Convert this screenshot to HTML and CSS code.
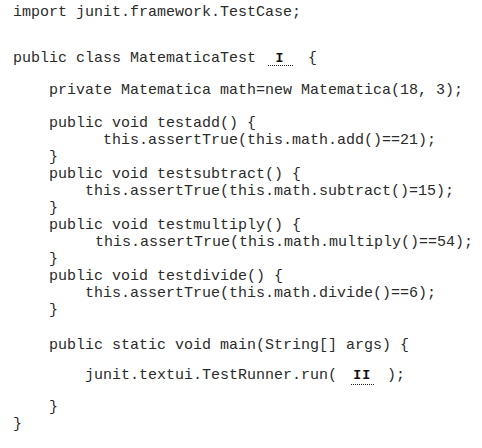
FILE: index.html
```html
<!DOCTYPE html>
<html>
<head>
<meta charset="utf-8">
<link rel="stylesheet" href="styles.css">
</head>
<body>
<div class="code">
  <div class="ln">import junit.framework.TestCase;</div>
  <div class="ln gap-lg">public class MatematicaTest<span class="blank b1"><span>I</span></span><span class="brace-open">{</span></div>
  <div class="ln i1 gap-md">private Matematica math=new Matematica(18, 3);</div>
  <div class="ln i1 gap-md2">public void testadd() {</div>
  <div class="ln i6">this.assertTrue(this.math.add()==21);</div>
  <div class="ln i1">}</div>
  <div class="ln i1">public void testsubtract() {</div>
  <div class="ln i4">this.assertTrue(this.math.subtract()=15);</div>
  <div class="ln i1">}</div>
  <div class="ln i1">public void testmultiply() {</div>
  <div class="ln i5">this.assertTrue(this.math.multiply()==54);</div>
  <div class="ln i1">}</div>
  <div class="ln i1">public void testdivide() {</div>
  <div class="ln i4">this.assertTrue(this.math.divide()==6);</div>
  <div class="ln i1">}</div>
  <div class="ln i1 gap-main">public static void main(String[] args) {</div>
  <div class="ln i4 gap-sm">junit.textui.TestRunner.run(<span class="blank b2"><span>II</span></span>);</div>
  <div class="ln i1 gap-sm2">}</div>
  <div class="ln">}</div>
</div>
</body>
</html>
```

FILE: styles.css
```css
html, body {
  margin: 0;
  padding: 0;
  background: #ffffff;
}

.code {
  padding: 4px 0 0 13px;
  font-family: "Courier New", "Nimbus Mono PS", "Nimbus Mono L", FreeMono, "Liberation Mono", monospace;
  font-size: 15px;
  line-height: 17px;
  color: #2b2b2b;
}

.ln {
  white-space: pre;
}

.i1 { padding-left: 36px; }
.i4 { padding-left: 72px; }
.i5 { padding-left: 82px; }
.i6 { padding-left: 90px; }

.gap-lg { margin-top: 29px; }
.gap-md { margin-top: 15px; }
.gap-md2 { margin-top: 16px; }
.gap-main { margin-top: 18px; }
.gap-sm { margin-top: 13px; }
.gap-sm2 { margin-top: 14px; }

.blank {
  display: inline-block;
  border-bottom: 1px dotted #222;
  text-align: center;
  font-weight: bold;
  font-size: 12px;
  line-height: 10px;
  letter-spacing: 1px;
  color: #111;
  vertical-align: baseline;
}

.blank span {
  display: inline-block;
  transform: scaleX(1.1);
}

.b1 {
  width: 25px;
  margin-left: 12px;
  margin-right: 15px;
  padding-bottom: 1px;
}

.b2 {
  width: 23px;
  margin-left: 14px;
  margin-right: 13px;
  padding-bottom: 3px;
}

.brace-open {
  color: #2b2b2b;
}
```
